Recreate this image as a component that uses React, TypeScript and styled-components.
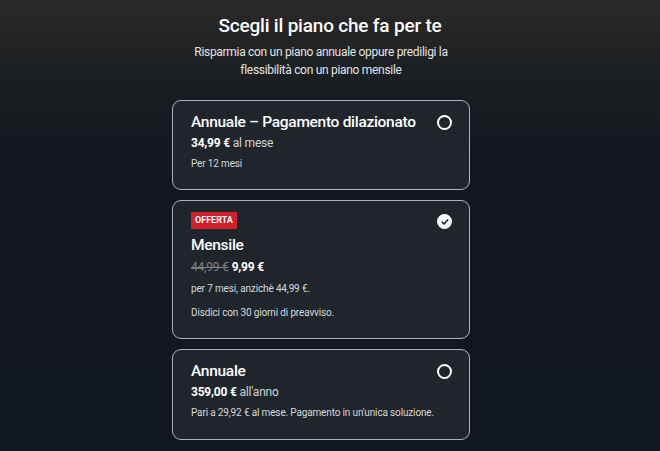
import styled, { createGlobalStyle } from 'styled-components';

const GlobalStyle = createGlobalStyle`
    html, body {
        margin: 0;
        padding: 0;
        height: 100%;
    }
    body {
        background: linear-gradient(180deg, #2a2928 0px, #1c1f22 70px, #12181e 150px, #11171e 100%);
        background-color: #11171e;
        font-family: Roboto, "Liberation Sans", sans-serif;
        color: #fff;
    }
`;

const Page = styled.div`
    min-height: 451px;
    display: flex;
    flex-direction: column;
    align-items: center;
    padding: 14px 18px 0 0;
    box-sizing: border-box;
`;

const Title = styled.h1`
    margin: 0 0 0 18px;
    font-size: 19px;
    font-weight: 500;
    line-height: 24px;
    letter-spacing: -0.2px;
    text-align: center;
`;

const Subtitle = styled.p`
    margin: 5px 0 0;
    width: 270px;
    font-size: 12px;
    line-height: 18px;
    letter-spacing: -0.3px;
    color: #e2e4e6;
    text-align: center;
`;

const PlanList = styled.div`
    margin-top: 21px;
    width: 298px;
    display: flex;
    flex-direction: column;
    gap: 10px;
`;

const Card = styled.div<{ bottom?: number }>`
    box-sizing: border-box;
    border: 1px solid #aeb2b6;
    border-radius: 9px;
    background: #1f252b;
    padding: 11px 17px ${({ bottom }) => bottom ?? 18}px 18px;
`;

const Header = styled.div`
    display: flex;
    align-items: flex-start;
    justify-content: space-between;
`;

const PlanName = styled.div<{ gap?: number }>`
    margin-top: ${({ gap }) => gap ?? 0}px;
    font-size: 15.5px;
    font-weight: 500;
    line-height: 20px;
    letter-spacing: -0.3px;
`;

const Radio = styled.span<{ checked?: boolean }>`
    flex: none;
    width: 15px;
    height: 15px;
    box-sizing: border-box;
    border-radius: 50%;
    border: 2px solid #fff;
    background: ${({ checked }) => checked ? '#fff' : 'transparent'};
    display: flex;
    align-items: center;
    justify-content: center;
    margin-top: ${({ checked }) => checked ? 2 : 3}px;
`;

const Badge = styled.span`
    display: inline-block;
    background: #d0202a;
    color: #fff;
    font-size: 9px;
    font-weight: 700;
    line-height: 17px;
    padding: 0 4px;
`;

const PriceRow = styled.div<{ gap?: number }>`
    margin-top: ${({ gap }) => gap ?? 3}px;
    font-size: 12px;
    line-height: 16px;
    letter-spacing: -0.2px;
    color: #cfd3d6;
`;

const Strong = styled.strong`
    color: #fff;
    font-weight: 700;
`;

const Old = styled.s`
    color: #7c8186;
    margin-right: 3px;
`;

const Note = styled.div<{ gap?: number }>`
    margin-top: ${({ gap }) => gap ?? 6}px;
    font-size: 10px;
    line-height: 14px;
    letter-spacing: -0.15px;
    color: #d6d9dc;
`;

const Check = () => (
    <svg width='8' height='8' viewBox='0 0 8 8'>
        <path d='M1.2 4.2 L3.1 6 L6.8 1.8' fill='none' stroke='#1f252b' strokeWidth='1.6' strokeLinecap='round' strokeLinejoin='round' />
    </svg>
);

export default function App() {
    return (
        <>
            <GlobalStyle />
            <Page>
                <Title>Scegli il piano che fa per te</Title>
                <Subtitle>Risparmia con un piano annuale oppure prediligi la flessibilità con un piano mensile</Subtitle>
                <PlanList>
                    <Card>
                        <Header>
                            <PlanName>Annuale – Pagamento dilazionato</PlanName>
                            <Radio />
                        </Header>
                        <PriceRow><Strong>34,99 €</Strong> al mese</PriceRow>
                        <Note>Per 12 mesi</Note>
                    </Card>
                    <Card>
                        <Header>
                            <Badge>OFFERTA</Badge>
                            <Radio checked><Check /></Radio>
                        </Header>
                        <PlanName gap={6}>Mensile</PlanName>
                        <PriceRow gap={4}><Old>44,99 €</Old><Strong>9,99 €</Strong></PriceRow>
                        <Note gap={7}>per 7 mesi, anzichè 44,99 €.</Note>
                        <Note gap={10}>Disdici con 30 giorni di preavviso.</Note>
                    </Card>
                    <Card bottom={19}>
                        <Header>
                            <PlanName>Annuale</PlanName>
                            <Radio />
                        </Header>
                        <PriceRow><Strong>359,00 €</Strong> all'anno</PriceRow>
                        <Note gap={6}>Pari a 29,92 € al mese. Pagamento in un'unica soluzione.</Note>
                    </Card>
                </PlanList>
            </Page>
        </>
    );
}
